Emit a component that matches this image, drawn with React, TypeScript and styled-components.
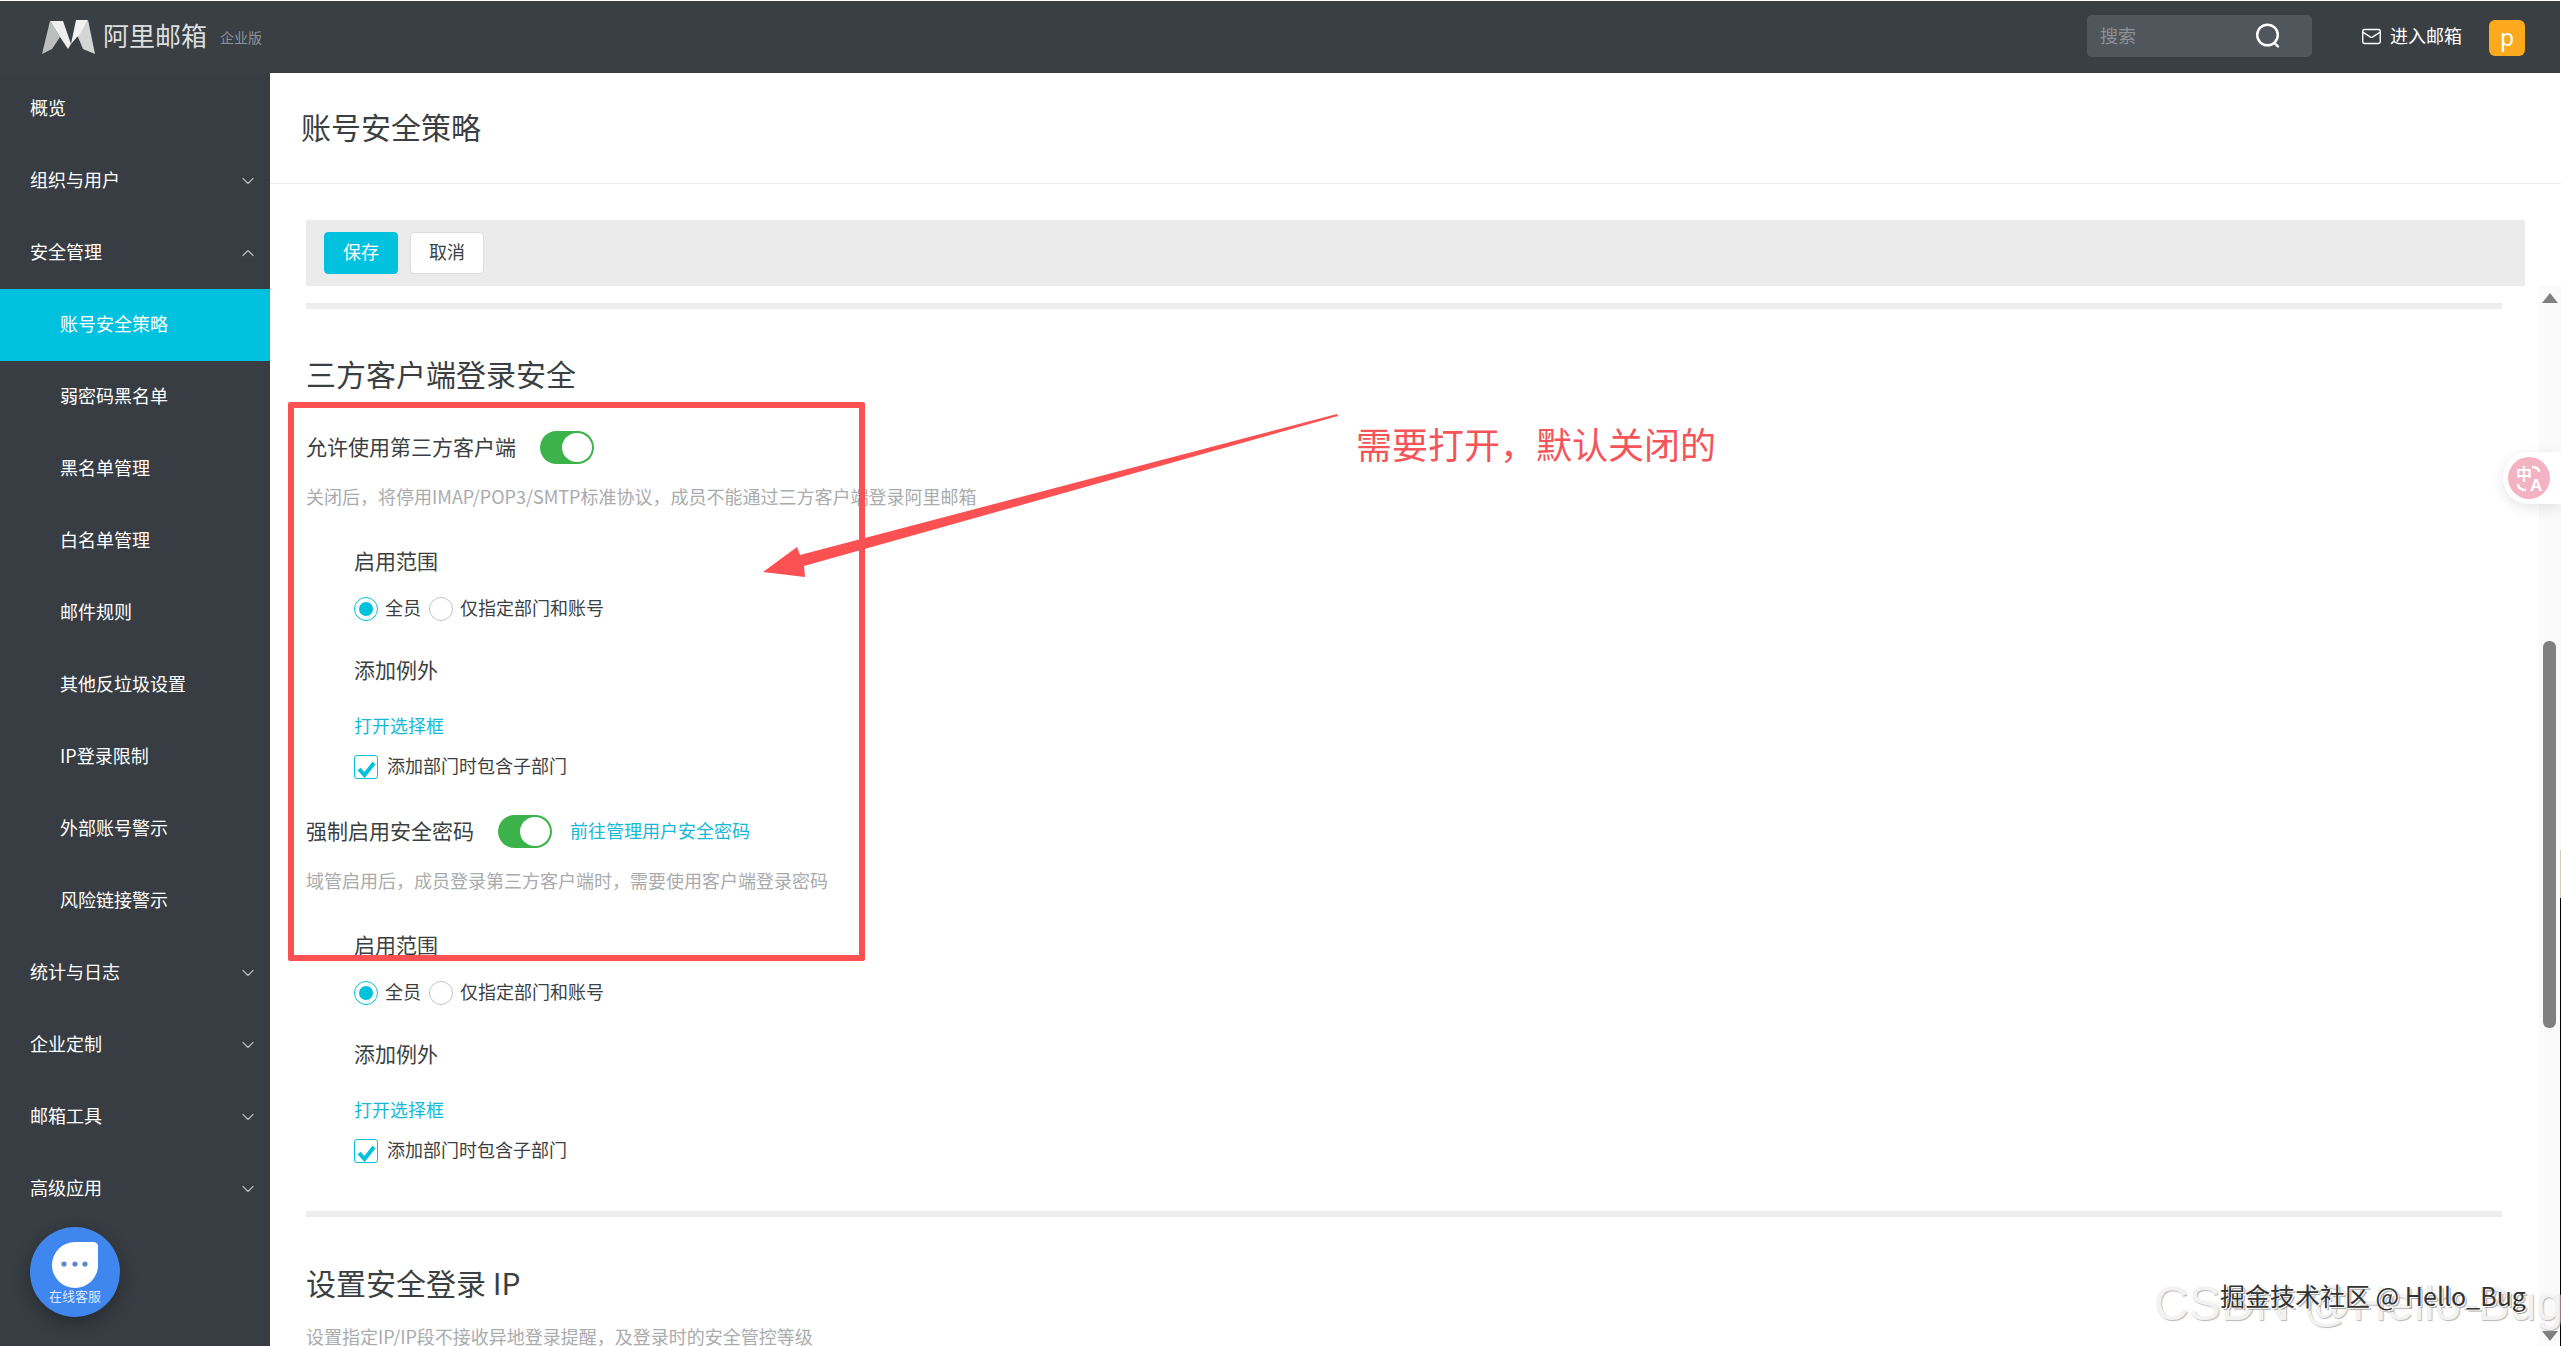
import React from 'react';
import styled, { createGlobalStyle } from 'styled-components';
import { Mail, ChevronDown, ChevronUp } from 'lucide-react';

const FONT = `"Noto Sans CJK SC", "Liberation Sans", sans-serif`;

const Global = createGlobalStyle`
  html, body { margin: 0; padding: 0; background: #fff; }
  body { font-family: ${FONT}; overflow: hidden; }
  * { box-sizing: border-box; }
`;

const Page = styled.div`
  position: relative;
  width: 2561px;
  height: 1346px;
  overflow: hidden;
  background: #fff;
  display: flex;
  flex-direction: column;
`;

const TopBar = styled.header`
  flex: none;
  height: 72px;
  margin-top: 1px;
  margin-right: 1px;
  background: #3a3f44;
  display: flex;
  align-items: center;
  color: #fff;
`;

const Brand = styled.div`
  display: flex;
  align-items: center;
  padding-left: 42px;
  flex: 1;
`;

const BrandName = styled.span`
  margin: 0 0 4px 8px;
  font-size: 26px;
  line-height: 34px;
  color: #dcdddd;
`;

const BrandEdition = styled.span`
  margin: 0 0 1px 13px;
  font-size: 14px;
  color: #8d9093;
`;

const SearchBox = styled.div`
  width: 225px;
  height: 42px;
  margin-top: -2px;
  background: #50565c;
  border-radius: 5px;
  display: flex;
  align-items: center;
  justify-content: space-between;
  padding: 0 32px 0 13px;
  font-size: 18px;
  color: #8d9195;
`;

const SearchText = styled.span`
  margin-bottom: 2px;
`;

const MailLink = styled.div`
  display: flex;
  align-items: center;
  margin-left: 49px;
  margin-top: -2px;
  font-size: 18px;
  gap: 8px;
`;

const MailText = styled.span`
  margin-bottom: 3px;
`;

const Avatar = styled.div`
  width: 36px;
  height: 36px;
  margin: 1px 35px 0 27px;
  border-radius: 6px;
  background: #fca91e;
  display: flex;
  align-items: center;
  justify-content: center;
  font-size: 23px;
  line-height: 1;
  font-family: "Noto Sans", sans-serif;
`;

const Body = styled.div`
  flex: 1;
  display: flex;
  min-height: 0;
`;

const Side = styled.nav`
  flex: none;
  width: 270px;
  background: #373d42;
  display: flex;
  flex-direction: column;
`;

const NavItem = styled.div<{ $active?: boolean; $sub?: boolean }>`
  flex: none;
  height: 72px;
  display: flex;
  align-items: center;
  justify-content: space-between;
  padding: 0 12px 0 ${p => (p.$sub ? 60 : 30)}px;
  font-size: 18px;
  color: #fff;
  background: ${p => (p.$active ? '#00c1de' : 'transparent')};
  svg { color: #b5b8ba; }
`;

const NavLabel = styled.span`
  margin-bottom: 4px;
`;

const Main = styled.main`
  flex: 1;
  min-width: 0;
  display: flex;
  flex-direction: column;
`;

const PageHead = styled.div`
  flex: none;
  height: 111px;
  padding: 0 0 4px 31px;
  display: flex;
  align-items: center;
  border-bottom: 1px solid #ececec;
  font-size: 30px;
  color: #3c3f42;
`;

const Content = styled.div`
  flex: 1;
  padding: 36px 36px 0;
  overflow: hidden;
`;

const Toolbar = styled.div`
  height: 66px;
  background: #ebebeb;
  display: flex;
  align-items: center;
  gap: 12px;
  padding: 0 18px;
`;

const Button = styled.button<{ $primary?: boolean }>`
  width: 74px;
  height: 42px;
  padding: 0 0 4px;
  font: 18px ${FONT};
  border-radius: 4px;
  border: 1px solid ${p => (p.$primary ? '#00c1de' : '#dcdcdc')};
  background: ${p => (p.$primary ? '#00c1de' : '#fff')};
  color: ${p => (p.$primary ? '#fff' : '#3c3f42')};
`;

const Rule = styled.div<{ $top: number }>`
  height: 6px;
  width: 2196px;
  margin-top: ${p => p.$top}px;
  background: #eeeeee;
`;

const SectionTitle = styled.h2<{ $top: number }>`
  margin: ${p => p.$top}px 0 0;
  height: 40px;
  font-size: 30px;
  font-weight: 400;
  line-height: 34px;
  color: #3c3f42;
`;

const SwitchRow = styled.div<{ $top: number }>`
  height: 34px;
  margin-top: ${p => p.$top}px;
  display: flex;
  align-items: center;
  font-size: 21px;
  color: #3c3f42;
`;

const RowLabel = styled.span`
  margin-bottom: 3px;
`;

const Toggle = styled.span<{ $gap: number }>`
  width: 54px;
  height: 33px;
  margin-left: ${p => p.$gap}px;
  border-radius: 17px;
  background: #3cb34a;
  display: flex;
  justify-content: flex-end;
  align-items: center;
  padding-right: 2px;
  &::after {
    content: '';
    width: 30px;
    height: 29px;
    border-radius: 50%;
    background: #fff;
  }
`;

const TextLink = styled.a`
  font-size: 18px;
  color: #14b9d6;
`;

const InlineLink = styled(TextLink)`
  margin: 0 0 3px 18px;
`;

const Hint = styled.div<{ $top?: number }>`
  height: 30px;
  line-height: 27px;
  margin-top: ${p => p.$top ?? 19}px;
  font-size: 18px;
  color: #a9abad;
`;

const Scope = styled.div`
  padding-left: 48px;
`;

const ScopeTitle = styled.div<{ $top: number }>`
  height: 30px;
  line-height: 26px;
  margin-top: ${p => p.$top}px;
  font-size: 21px;
  color: #3c3f42;
`;

const OptionRow = styled.div<{ $top: number }>`
  height: 30px;
  margin-top: ${p => p.$top}px;
  display: flex;
  align-items: center;
  font-size: 18px;
  color: #3c3f42;
`;

const OptionText = styled.span`
  margin-bottom: 5px;
`;

const Radio = styled.span<{ $on?: boolean }>`
  width: 24px;
  height: 24px;
  border-radius: 50%;
  margin: 0 7px 1px 0;
  border: 1px solid ${p => (p.$on ? '#00c1de' : '#c4c4c4')};
  display: flex;
  align-items: center;
  justify-content: center;
  &::after {
    content: '';
    display: ${p => (p.$on ? 'block' : 'none')};
    width: 14px;
    height: 14px;
    border-radius: 50%;
    background: #00c1de;
  }
`;

const RadioLabel = styled(OptionText)`
  margin-right: 8px;
`;

const Check = styled.span`
  width: 24px;
  height: 24px;
  margin-right: 9px;
  border: 1px solid #00c1de;
  border-radius: 3px;
  display: flex;
  align-items: flex-end;
  justify-content: center;
`;

const LinkRow = styled.div`
  height: 30px;
  line-height: 27px;
  margin-top: 26px;
`;

const Overlay = styled.div`
  position: absolute;
  left: 0;
  top: 0;
  width: 100%;
  height: 100%;
  pointer-events: none;
`;

const RedBox = styled.div`
  position: absolute;
  left: 288px;
  top: 402px;
  width: 577px;
  height: 559px;
  border: 6px solid #fb5153;
  border-radius: 2px;
`;

const Arrow = styled.svg`
  position: absolute;
  left: 0;
  top: 0;
`;

const Callout = styled.div`
  position: absolute;
  left: 1356px;
  top: 419px;
  font-size: 36px;
  line-height: 48px;
  color: #f5545a;
  white-space: nowrap;
`;

const TrackBar = styled.div`
  position: absolute;
  right: 0;
  top: 286px;
  bottom: 0;
  width: 22px;
  background: #fafafa;
`;

const EdgeLine = styled.div`
  position: absolute;
  right: 0;
  top: 850px;
  bottom: 0;
  width: 1px;
  background: linear-gradient(#d9cdb8 0, #d9cdb8 48px, #000 48px);
`;

const ArrowUp = styled.div`
  position: absolute;
  left: 3px;
  top: 7px;
  width: 0;
  height: 0;
  border-left: 8px solid transparent;
  border-right: 8px solid transparent;
  border-bottom: 10px solid #808080;
`;

const ArrowDown = styled.div`
  position: absolute;
  left: 3px;
  bottom: 5px;
  width: 0;
  height: 0;
  border-left: 8px solid transparent;
  border-right: 8px solid transparent;
  border-top: 10px solid #808080;
`;

const Thumb = styled.div`
  position: absolute;
  left: 4px;
  top: 355px;
  width: 13px;
  height: 387px;
  border-radius: 6px;
  background: #808080;
`;

const TranslatePill = styled.div`
  position: absolute;
  right: 0;
  top: 452px;
  width: 58px;
  height: 52px;
  padding: 5px 0 0 5px;
  background: #fff;
  border-radius: 26px 0 0 26px;
  box-shadow: 0 4px 14px rgba(0, 0, 0, 0.1);
`;

const ChatButton = styled.div`
  position: absolute;
  left: 30px;
  top: 1227px;
  width: 90px;
  height: 90px;
  border-radius: 50%;
  background: #3f86ee;
  box-shadow: 0 6px 18px rgba(0, 0, 0, 0.3);
  display: flex;
  flex-direction: column;
  align-items: center;
  padding-top: 15px;
`;

const ChatLabel = styled.span`
  margin-top: -1px;
  font-size: 13px;
  line-height: 18px;
  color: #dbe9ff;
  white-space: nowrap;
`;

const WaterCsdn = styled.div`
  position: absolute;
  left: 2154px;
  top: 1276px;
  font-family: "Liberation Sans", sans-serif;
  font-size: 48px;
  line-height: 56px;
  color: #f2f2f2;
  text-shadow: 1px 1px 1px #b8b8b8;
  white-space: nowrap;
`;

const WaterJuejin = styled.div`
  position: absolute;
  left: 2220px;
  top: 1278px;
  font-size: 25px;
  line-height: 34px;
  color: #333;
  text-shadow: 1px 1px 0 #fff, 2px 2px 0 #aaa;
  white-space: nowrap;
`;

const topItems = [
  { label: '概览' },
  { label: '组织与用户', icon: 'down' },
  { label: '安全管理', icon: 'up' },
  { label: '账号安全策略', sub: true, active: true },
  { label: '弱密码黑名单', sub: true },
  { label: '黑名单管理', sub: true },
  { label: '白名单管理', sub: true },
  { label: '邮件规则', sub: true },
  { label: '其他反垃圾设置', sub: true },
  { label: 'IP登录限制', sub: true },
  { label: '外部账号警示', sub: true },
  { label: '风险链接警示', sub: true },
  { label: '统计与日志', icon: 'down' },
  { label: '企业定制', icon: 'down' },
  { label: '邮箱工具', icon: 'down' },
  { label: '高级应用', icon: 'down' },
];

const LogoMark = () => (
  <svg width="53" height="35" viewBox="0 0 53 35">
    <polygon points="0,34 8,1 18,17 10,29" fill="#bdbebe" />
    <polygon points="8,1 21,1 29,24 26,29 18,17" fill="#eeeeee" />
    <polygon points="46,0 34,0 29,24 35,17 38,16" fill="#f2f2f2" />
    <polygon points="46,0 53,34 41,29 36,17" fill="#d4d5d5" />
  </svg>
);

const SearchIcon = () => (
  <svg width="24" height="26" viewBox="0 0 24 26" fill="none" stroke="#fff" strokeWidth="2.4">
    <circle cx="11.5" cy="12" r="10.3" />
    <path d="M18.5 20l3.5 3.5" strokeLinecap="round" />
  </svg>
);

const CheckMark = () => (
  <svg width="20" height="18" viewBox="0 0 20 18" fill="none" stroke="#00c1de" strokeWidth="4">
    <path d="M3 9l5.5 6L18 3" />
  </svg>
);

const TranslateIcon = () => (
  <svg width="42" height="42" viewBox="0 0 42 42">
    <circle cx="21" cy="21" r="21" fill="#f4b3c2" />
    <text x="8" y="23" fontSize="16" fontWeight="700" fontFamily={FONT} fill="#fff">中</text>
    <text x="22" y="34" fontSize="17" fontWeight="700" fontFamily={'"Liberation Sans", sans-serif'} fill="#fff">A</text>
    <path d="M24 10c4 0 7 1 7 5M10 27c0 4 3 6 8 6" fill="none" stroke="#fff" strokeWidth="2.4" />
  </svg>
);

const ChatIcon = () => (
  <svg width="46" height="46" viewBox="0 0 46 46">
    <path d="M23 0H41q5 0 5 5V23A23 23 0 1 1 23 0Z" fill="#fff" />
    <circle cx="12" cy="22" r="2.6" fill="#5c88c9" />
    <circle cx="23" cy="22" r="2.6" fill="#5c88c9" />
    <circle cx="33" cy="22" r="2.6" fill="#5c88c9" />
  </svg>
);

const ScopeBlock = () => (
  <Scope>
    <ScopeTitle $top={34}>启用范围</ScopeTitle>
    <OptionRow $top={17}>
      <Radio $on />
      <RadioLabel>全员</RadioLabel>
      <Radio />
      <OptionText>仅指定部门和账号</OptionText>
    </OptionRow>
    <ScopeTitle $top={32}>添加例外</ScopeTitle>
    <LinkRow><TextLink>打开选择框</TextLink></LinkRow>
    <OptionRow $top={10}>
      <Check><CheckMark /></Check>
      <OptionText>添加部门时包含子部门</OptionText>
    </OptionRow>
  </Scope>
);

export default function App() {
  return (
    <Page>
      <Global />
      <TopBar>
        <Brand>
          <LogoMark />
          <BrandName>阿里邮箱</BrandName>
          <BrandEdition>企业版</BrandEdition>
        </Brand>
        <SearchBox>
          <SearchText>搜索</SearchText>
          <SearchIcon />
        </SearchBox>
        <MailLink>
          <Mail size={21} strokeWidth={1.6} />
          <MailText>进入邮箱</MailText>
        </MailLink>
        <Avatar>p</Avatar>
      </TopBar>
      <Body>
        <Side>
          {topItems.map(item => (
            <NavItem key={item.label} $sub={item.sub} $active={item.active}>
              <NavLabel>{item.label}</NavLabel>
              {item.icon === 'down' && <ChevronDown size={20} strokeWidth={1.5} />}
              {item.icon === 'up' && <ChevronUp size={20} strokeWidth={1.5} />}
            </NavItem>
          ))}
        </Side>
        <Main>
          <PageHead>账号安全策略</PageHead>
          <Content>
            <Toolbar>
              <Button $primary>保存</Button>
              <Button>取消</Button>
            </Toolbar>
            <Rule $top={17} />
            <SectionTitle $top={47}>三方客户端登录安全</SectionTitle>
            <SwitchRow $top={34}>
              <RowLabel>允许使用第三方客户端</RowLabel>
              <Toggle $gap={24} />
            </SwitchRow>
            <Hint>关闭后，将停用IMAP/POP3/SMTP标准协议，成员不能通过三方客户端登录阿里邮箱</Hint>
            <ScopeBlock />
            <SwitchRow $top={32}>
              <RowLabel>强制启用安全密码</RowLabel>
              <Toggle $gap={24} />
              <InlineLink>前往管理用户安全密码</InlineLink>
            </SwitchRow>
            <Hint>域管启用后，成员登录第三方客户端时，需要使用客户端登录密码</Hint>
            <ScopeBlock />
            <Rule $top={45} />
            <SectionTitle $top={48}>设置安全登录 IP</SectionTitle>
            <Hint $top={18}>设置指定IP/IP段不接收异地登录提醒，及登录时的安全管控等级</Hint>
          </Content>
        </Main>
      </Body>
      <Overlay>
        <TrackBar>
          <ArrowUp />
          <Thumb />
          <ArrowDown />
        </TrackBar>
        <EdgeLine />
        <RedBox />
        <Arrow width="2561" height="1346" viewBox="0 0 2561 1346">
          <polygon points="1337,414 1338,416 804,566 805,577 763,572 797,547 800,555" fill="#fb5153" />
        </Arrow>
        <Callout>需要打开，默认关闭的</Callout>
        <TranslatePill><TranslateIcon /></TranslatePill>
        <ChatButton>
          <ChatIcon />
          <ChatLabel>在线客服</ChatLabel>
        </ChatButton>
        <WaterCsdn>CSDN @Hello-Bug</WaterCsdn>
        <WaterJuejin>掘金技术社区 @ Hello_Bug</WaterJuejin>
      </Overlay>
    </Page>
  );
}
